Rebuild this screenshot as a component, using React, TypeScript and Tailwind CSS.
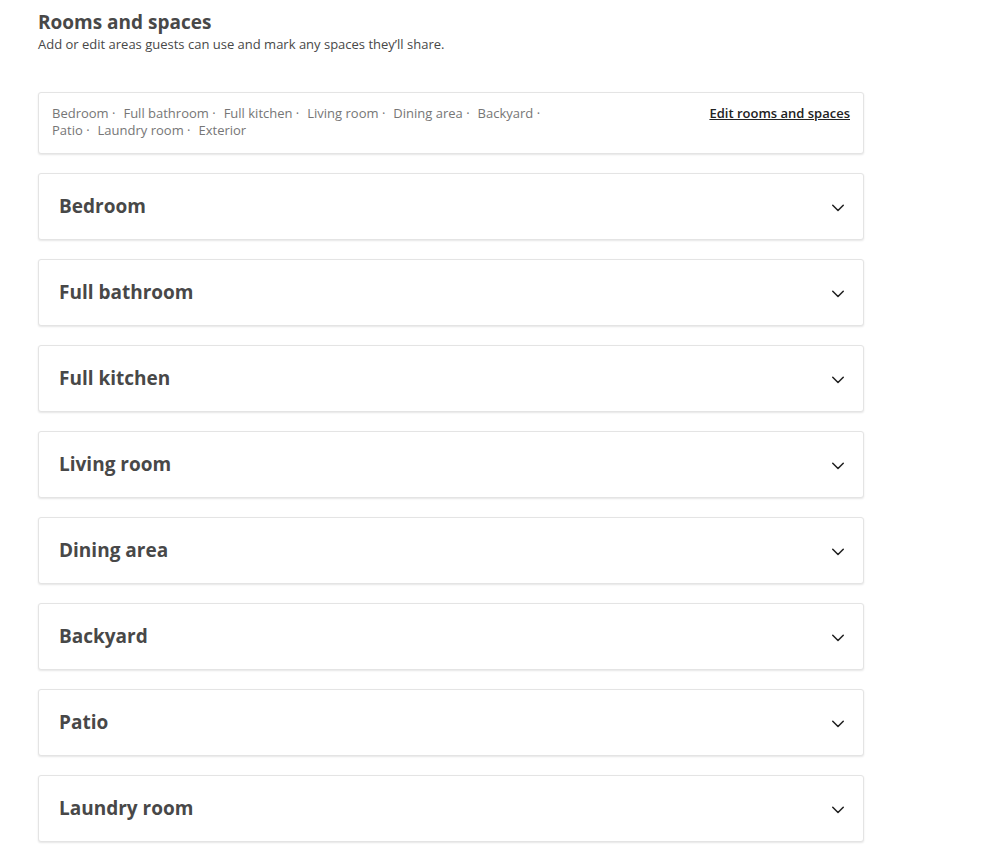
import React from 'react';

const rooms = ['Bedroom', 'Full bathroom', 'Full kitchen', 'Living room', 'Dining area', 'Backyard', 'Patio', 'Laundry room'];
const summary = [...rooms, 'Exterior'];

const Chevron = () => (
    <svg width="14" height="14" viewBox="0 0 32 32" fill="none" stroke="#222" strokeWidth="3.5" strokeLinecap="round" strokeLinejoin="round">
        <path d="M28 12L16 24 4 12" />
    </svg>
);

export default function App() {
    return (
        <div className="bg-white min-h-[860px] pl-[38px] pt-[10px] text-[#484848]" style={{ fontFamily: '"Open Sans", "Liberation Sans", sans-serif' }}>
            <div className="w-[826px]">
                <h1 className="text-[19px] font-bold leading-[24px] text-[#484848]">Rooms and spaces</h1>
                <p className="text-[13px] leading-[20px] text-[#484848]">Add or edit areas guests can use and mark any spaces they’ll share.</p>
                <div className="mt-[38px] bg-white border border-[#e4e4e4] rounded-[3px] shadow-[0_1px_2px_rgba(0,0,0,0.1)] px-[13px] py-[12px] flex justify-between items-start h-[62px]">
                    <div className="w-[520px] text-[13px] leading-[17px] text-[#767676]">
                        {summary.map((s, i) => (
                            <span key={s} className="mr-[8px] inline-block">{s}{i < summary.length - 1 ? ' ·' : ''}</span>
                        ))}
                    </div>
                    <a className="text-[13px] font-semibold underline text-[#222] leading-[17px]">Edit rooms and spaces</a>
                </div>
                <div className="mt-[19px] flex flex-col gap-[19px]">
                    {rooms.map(r => (
                        <div key={r} className="h-[67px] bg-white border border-[#e4e4e4] rounded-[3px] shadow-[0_1px_2px_rgba(0,0,0,0.1)] pl-[20px] pr-[18px] flex items-center justify-between">
                            <span className="text-[19px] font-bold text-[#484848]">{r}</span>
                            <Chevron />
                        </div>
                    ))}
                </div>
            </div>
        </div>
    );
}
